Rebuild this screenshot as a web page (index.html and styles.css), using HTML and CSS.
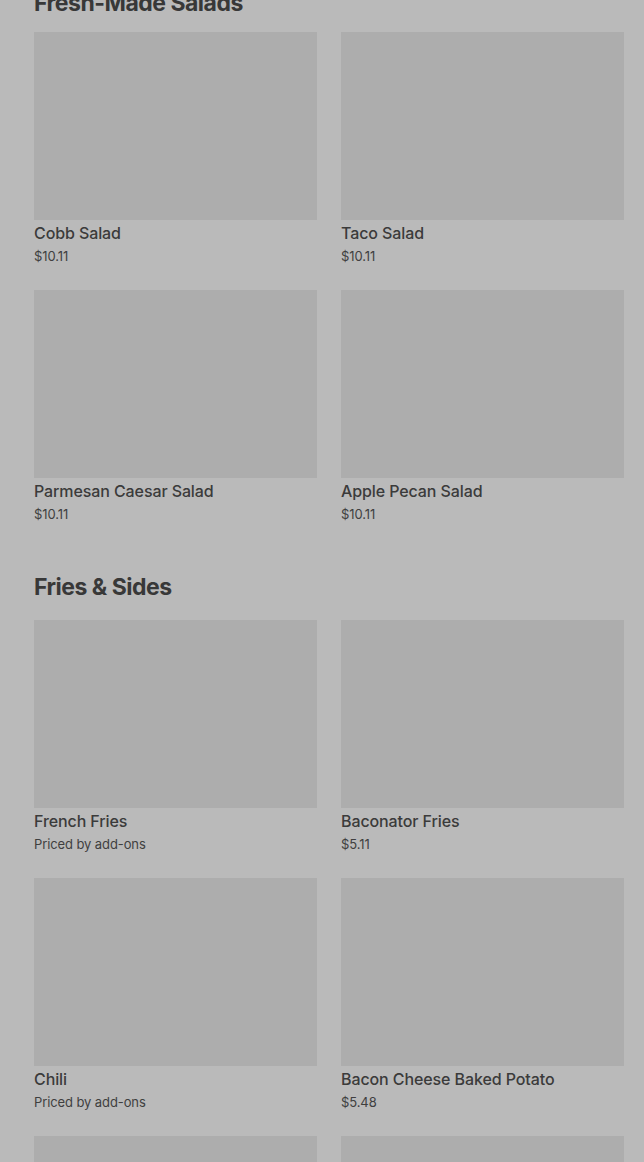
FILE: index.html
```html
<!DOCTYPE html>
<html lang="en">
<head>
<meta charset="utf-8">
<title>Menu</title>
<link rel="stylesheet" href="styles.css">
</head>
<body>
<main class="menu">
  <section class="section section-first">
    <h2 class="section-title">Fresh-Made Salads</h2>
    <div class="grid">
      <div class="card"><div class="thumb"></div><div class="name">Cobb Salad</div><div class="price">$10.11</div></div>
      <div class="card"><div class="thumb"></div><div class="name">Taco Salad</div><div class="price">$10.11</div></div>
      <div class="card"><div class="thumb"></div><div class="name">Parmesan Caesar Salad</div><div class="price">$10.11</div></div>
      <div class="card"><div class="thumb"></div><div class="name">Apple Pecan Salad</div><div class="price">$10.11</div></div>
    </div>
  </section>
  <section class="section">
    <h2 class="section-title">Fries &amp; Sides</h2>
    <div class="grid">
      <div class="card"><div class="thumb"></div><div class="name">French Fries</div><div class="price">Priced by add-ons</div></div>
      <div class="card"><div class="thumb"></div><div class="name">Baconator Fries</div><div class="price">$5.11</div></div>
      <div class="card"><div class="thumb"></div><div class="name">Chili</div><div class="price">Priced by add-ons</div></div>
      <div class="card"><div class="thumb"></div><div class="name">Bacon Cheese Baked Potato</div><div class="price">$5.48</div></div>
      <div class="card"><div class="thumb"></div><div class="name">Plain Baked Potato</div><div class="price">$3.11</div></div>
      <div class="card"><div class="thumb"></div><div class="name">Sour Cream &amp; Chive Baked Potato</div><div class="price">$3.79</div></div>
    </div>
  </section>
</main>
</body>
</html>
```

FILE: styles.css
```css
html, body {
  margin: 0;
  padding: 0;
  background: #bababa;
}
body {
  font-family: Inter, "Liberation Sans", Arial, sans-serif;
  color: #3a3a3a;
  overflow: hidden;
}
.menu {
  padding: 0 20px 0 34px;
  display: flex;
  flex-direction: column;
  gap: 49px;
}
.section-first {
  margin-top: -11px;
}
.section-title {
  margin: 0 0 19px 0;
  font-size: 23px;
  line-height: 28px;
  font-weight: 700;
  letter-spacing: -0.5px;
  color: #383838;
}
.section-first .section-title {
  margin-bottom: 15px;
}
.grid {
  display: grid;
  grid-template-columns: 1fr 1fr;
  column-gap: 24px;
  row-gap: 24px;
}
.thumb {
  height: 188px;
  background: #adadad;
}
.name {
  margin-top: 3px;
  font-size: 16px;
  line-height: 20px;
  font-weight: 500;
  letter-spacing: -0.1px;
  color: #3b3b3b;
}
.price {
  margin-top: 3px;
  font-size: 13px;
  line-height: 20px;
  font-weight: 400;
  letter-spacing: -0.1px;
  color: #3f3f3f;
}
```
